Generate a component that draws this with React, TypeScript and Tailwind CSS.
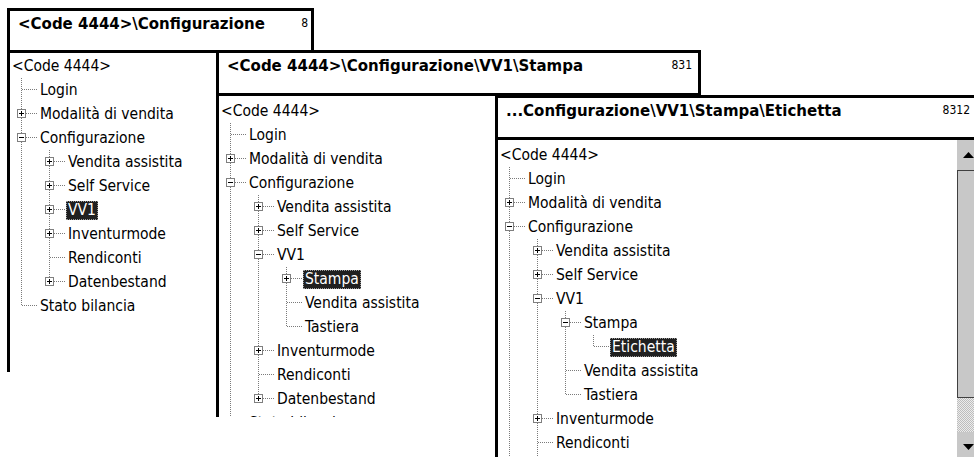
import React from "react";

type TNode = { label: string; children?: TNode[]; open?: boolean; sel?: boolean };

const leaf = (label: string, sel = false): TNode => ({ label, sel });
const closed = (label: string, sel = false): TNode => ({ label, children: [leaf("x")], open: false, sel });

function buildTree(level: 1 | 2 | 3): TNode {
  let vv1: TNode;
  if (level === 1) vv1 = closed("VV1", true);
  else if (level === 2)
    vv1 = { label: "VV1", open: true, children: [closed("Stampa", true), leaf("Vendita assistita"), leaf("Tastiera")] };
  else
    vv1 = {
      label: "VV1",
      open: true,
      children: [{ label: "Stampa", open: true, children: [leaf("Etichetta", true)] }, leaf("Vendita assistita"), leaf("Tastiera")],
    };
  return {
    label: "<Code 4444>",
    open: true,
    children: [
      leaf("Login"),
      closed("Modalità di vendita"),
      {
        label: "Configurazione",
        open: true,
        children: [
          closed("Vendita assistita"),
          closed("Self Service"),
          vv1,
          closed("Inventurmode"),
          leaf("Rendiconti"),
          closed("Datenbestand"),
        ],
      },
      leaf("Stato bilancia"),
    ],
  };
}

type Row = { node: TNode; depth: number; lines: boolean[]; last: boolean };

function flatten(node: TNode, depth: number, lines: boolean[], last: boolean, out: Row[]) {
  out.push({ node, depth, lines, last });
  if (node.open && node.children) {
    const n = node.children.length;
    node.children.forEach((c, i) =>
      flatten(c, depth + 1, depth >= 1 ? [...lines, !last] : lines, i === n - 1, out)
    );
  }
}

const LINE = "#7a7a7a";

function Gutter({ kind, last, box }: { kind: "cont" | "none" | "own"; last?: boolean; box?: "plus" | "minus" | null }) {
  return (
    <svg width="28" height="24" className="block flex-none" shapeRendering="crispEdges">
      {kind === "cont" && <line x1="11.5" y1="0" x2="11.5" y2="24" stroke={LINE} strokeDasharray="1 1" />}
      {kind === "own" && (
        <>
          <line x1="11.5" y1="0" x2="11.5" y2={last ? 12 : 24} stroke={LINE} strokeDasharray="1 1" />
          <line x1="12" y1="11.5" x2="28" y2="11.5" stroke={LINE} strokeDasharray="1 1" />
          {box && (
            <>
              <rect x="7.5" y="7.5" width="8" height="8" fill="white" stroke="#7f7f7f" />
              <line x1="9" y1="11.5" x2="14" y2="11.5" stroke="black" />
              {box === "plus" && <line x1="11.5" y1="9" x2="11.5" y2="14" stroke="black" />}
            </>
          )}
        </>
      )}
    </svg>
  );
}

function Tree({ level }: { level: 1 | 2 | 3 }) {
  const rows: Row[] = [];
  flatten(buildTree(level), 0, [], true, rows);
  return (
    <div className="flex flex-col font-['DejaVu_Sans_Condensed','DejaVu_Sans',sans-serif] text-[15.5px] text-black [font-stretch:condensed]">
      {rows.map((r, i) => {
        const hasKids = !!r.node.children;
        return (
          <div key={i} className="flex h-[24px] flex-none items-center whitespace-nowrap">
            {r.depth > 0 && (
              <>
                {r.lines.map((cont, j) => (
                  <Gutter key={j} kind={cont ? "cont" : "none"} />
                ))}
                <Gutter kind="own" last={r.last} box={hasKids ? (r.node.open ? "minus" : "plus") : null} />
              </>
            )}
            <span
              className={
                r.node.sel
                  ? "border border-dotted border-[#9a9a9a] bg-[#202020] px-[1px] leading-[17px] text-white"
                  : "px-[2px] leading-[17px]"
              }
            >
              {r.node.label}
            </span>
          </div>
        );
      })}
    </div>
  );
}

function Header({ title, num, h, pr }: { title: string; num: string; h: string; pr: string }) {
  return (
    <div className={`flex flex-none items-start justify-between border-[3px] border-black bg-white pl-[8px] pt-[4px] ${h} ${pr}`}>
      <span className="whitespace-nowrap font-['DejaVu_Sans',sans-serif] text-[15px] font-bold leading-[18px] text-black">
        {title}
      </span>
      <span className="mt-[1px] font-['DejaVu_Sans_Condensed','DejaVu_Sans',sans-serif] text-[12px] leading-[14px] text-black [font-stretch:condensed]">
        {num}
      </span>
    </div>
  );
}

function Scrollbar() {
  return (
    <div className="flex w-[23px] flex-none flex-col bg-[#c8c8c8]">
      <div className="flex h-[30px] flex-none items-center justify-center">
        <svg width="11" height="6" className="block">
          <path d="M5.5 0 L11 6 L0 6 Z" fill="black" />
        </svg>
      </div>
      <div className="h-[228px] flex-none border border-[#404040] bg-[#c8c8c8]" />
      <div className="h-[34px] flex-none bg-[repeating-conic-gradient(#bdbdbd_0_25%,#ececec_0_50%)] bg-[length:2px_2px]" />
      <div className="flex h-[30px] flex-none items-center justify-center">
        <svg width="11" height="6" className="block">
          <path d="M0 0 L11 0 L5.5 6 Z" fill="black" />
        </svg>
      </div>
    </div>
  );
}

export default function App() {
  return (
    <div className="relative h-[457px] w-[974px] overflow-hidden bg-white">
      {/* Window 1 */}
      <div className="absolute left-[7px] top-[8px] flex h-[364px] w-[307px] flex-col">
        <Header title="<Code 4444>\Configurazione" num="8" h="h-[45px]" pr="pr-[3px]" />
        <div className="flex-1 overflow-hidden border-l-[3px] border-black bg-white pt-[1px]">
          <Tree level={1} />
        </div>
      </div>

      {/* Window 2 */}
      <div className="absolute left-[216px] top-[50px] flex h-[367px] w-[485px] flex-col">
        <Header title="<Code 4444>\Configurazione\VV1\Stampa" num="831" h="h-[46px]" pr="pr-[6px]" />
        <div className="flex-1 overflow-hidden border-l-[3px] border-black bg-white pt-[3px]">
          <Tree level={2} />
        </div>
      </div>

      {/* Window 3 */}
      <div className="absolute left-[495px] top-[95px] flex h-[380px] w-[485px] flex-col">
        <Header title="...Configurazione\VV1\Stampa\Etichetta" num="8312" h="h-[45px]" pr="pr-[7px]" />
        <div className="flex flex-1 overflow-hidden border-l-[3px] border-black bg-white">
          <div className="flex-1 overflow-hidden pt-[3px]">
            <Tree level={3} />
          </div>
          <Scrollbar />
        </div>
      </div>
    </div>
  );
}
